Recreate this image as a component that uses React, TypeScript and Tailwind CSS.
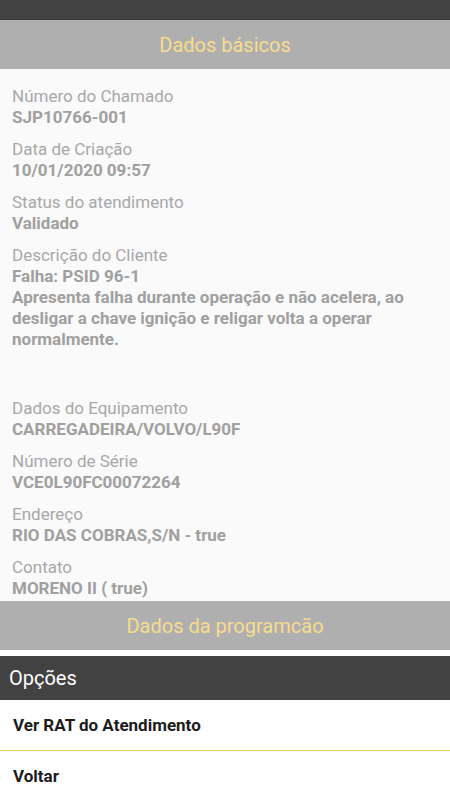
export default function App() {
  const fields = [
    { label: "Número do Chamado", value: ["SJP10766-001"] },
    { label: "Data de Criação", value: ["10/01/2020 09:57"] },
    { label: "Status do atendimento", value: ["Validado"] },
    {
      label: "Descrição do Cliente",
      value: [
        "Falha: PSID 96-1",
        "Apresenta falha durante operação e não acelera, ao desligar a chave ignição e religar volta a operar normalmente.",
      ],
      extra: true,
    },
    { label: "Dados do Equipamento", value: ["CARREGADEIRA/VOLVO/L90F"] },
    { label: "Número de Série", value: ["VCE0L90FC00072264"] },
    { label: "Endereço", value: ["RIO DAS COBRAS,S/N - true"] },
    { label: "Contato", value: ["MORENO II ( true)"] },
  ];

  return (
    <div
      className="flex h-screen w-full flex-col bg-white"
      style={{ fontFamily: "Roboto, 'Noto Sans', sans-serif" }}
    >
      <div className="h-[20px] shrink-0 border-b border-[#383838] bg-[#424242]" />

      <div className="flex h-[49px] shrink-0 items-center justify-center bg-[#afafaf] text-[20px] text-[#f8dc8c]">
        Dados básicos
      </div>

      <div className="flex-1 overflow-hidden bg-[#fafafa] px-[12px] pt-[16px]">
        {fields.map((f) => (
          <div key={f.label} className={f.extra ? "mb-[47px]" : "mb-[10px]"}>
            <div className="text-[17px] leading-[22px] text-[#a8a8a8]">{f.label}</div>
            {f.value.map((v) => (
              <div key={v} className="pr-[16px] text-[17px] font-bold leading-[21px] text-[#a0a0a0]">
                {v}
              </div>
            ))}
          </div>
        ))}
      </div>

      <div className="flex h-[49px] shrink-0 items-center justify-center bg-[#afafaf] text-[20px] text-[#f8dc8c]">
        Dados da programcão
      </div>

      <div className="h-[6px] shrink-0 bg-white" />

      <div className="flex h-[44px] shrink-0 items-center bg-[#424242] px-[9px] text-[20px] text-white">
        Opções
      </div>

      <div className="flex h-[50px] shrink-0 items-center px-[13px] pt-[2px] text-[17px] font-bold text-[#1c1c1c]">
        Ver RAT do Atendimento
      </div>
      <div className="h-px shrink-0 bg-[#ecd94a]" />
      <div className="flex h-[49px] shrink-0 items-center px-[13px] pt-[2px] text-[17px] font-bold text-[#1c1c1c]">
        Voltar
      </div>
    </div>
  );
}
